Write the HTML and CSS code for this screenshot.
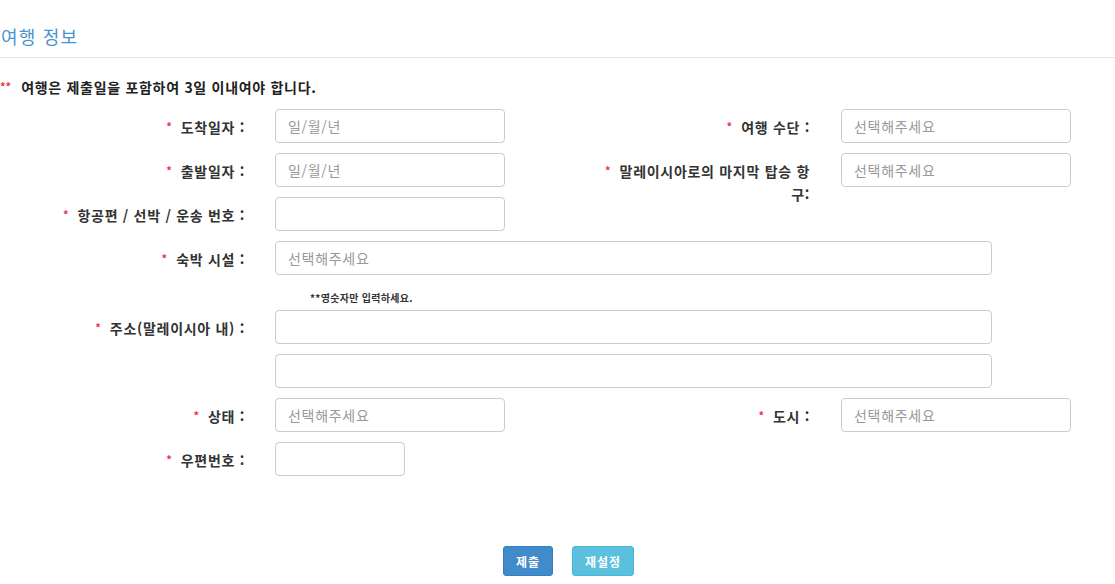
FILE: index.html
```html
<!DOCTYPE html>
<html lang="ko">
<head>
<meta charset="utf-8">
<title>여행 정보</title>
<link rel="stylesheet" href="styles.css">
</head>
<body>
<div class="page">
  <h3 class="section-title">여행 정보</h3>
  <div class="rule"></div>
  <p class="notice"><span class="req notice-star">**</span>여행은 제출일을 포함하여 3일 이내여야 합니다.</p>

  <form class="form">
    <div class="row">
      <div class="group">
        <label class="label"><span class="req">*</span>도착일자 :</label>
        <input class="input" type="text" placeholder="일/월/년">
      </div>
      <div class="group group-right">
        <label class="label label-right"><span class="req">*</span>여행 수단 :</label>
        <input class="input" type="text" placeholder="선택해주세요">
      </div>
    </div>

    <div class="row">
      <div class="group">
        <label class="label"><span class="req">*</span>출발일자 :</label>
        <input class="input" type="text" placeholder="일/월/년">
      </div>
      <div class="group group-right">
        <label class="label label-right"><span class="req">*</span>말레이시아로의 마지막 탑승 항구:</label>
        <input class="input" type="text" placeholder="선택해주세요">
      </div>
    </div>

    <div class="row">
      <div class="group">
        <label class="label"><span class="req">*</span>항공편 / 선박 / 운송 번호 :</label>
        <input class="input" type="text">
      </div>
    </div>

    <div class="row">
      <div class="group">
        <label class="label"><span class="req">*</span>숙박 시설 :</label>
        <input class="input input-wide" type="text" placeholder="선택해주세요">
      </div>
    </div>

    <div class="hint">**영숫자만 입력하세요.</div>

    <div class="row">
      <div class="group">
        <label class="label"><span class="req">*</span>주소(말레이시아 내) :</label>
        <input class="input input-wide" type="text">
      </div>
    </div>

    <div class="row">
      <div class="group">
        <span class="label"></span>
        <input class="input input-wide" type="text">
      </div>
    </div>

    <div class="row">
      <div class="group">
        <label class="label"><span class="req">*</span>상태 :</label>
        <input class="input" type="text" placeholder="선택해주세요">
      </div>
      <div class="group group-right">
        <label class="label label-right"><span class="req">*</span>도시 :</label>
        <input class="input" type="text" placeholder="선택해주세요">
      </div>
    </div>

    <div class="row">
      <div class="group">
        <label class="label"><span class="req">*</span>우편번호 :</label>
        <input class="input input-short" type="text">
      </div>
    </div>

    <div class="actions">
      <button type="button" class="btn btn-primary">제출</button>
      <button type="button" class="btn btn-info">재설정</button>
    </div>
  </form>
</div>
</body>
</html>
```

FILE: styles.css
```css
* {
  box-sizing: border-box;
}

html, body {
  margin: 0;
  padding: 0;
  background: #ffffff;
}

body {
  font-family: "Noto Sans CJK KR", "Noto Sans", "Liberation Sans", sans-serif;
  color: #333333;
  font-size: 14px;
  letter-spacing: 0.7px;
}

.page {
  width: 1115px;
}

.section-title {
  margin: 0;
  padding: 24px 0 0 1px;
  height: 57px;
  font-size: 18px;
  line-height: 24px;
  font-weight: 400;
  letter-spacing: 1.2px;
  color: #4b93cf;
}

.rule {
  height: 1px;
  background: #e3e3e3;
}

.notice {
  margin: 0;
  padding-top: 19px;
  height: 51px;
  font-size: 14px;
  line-height: 20px;
  font-weight: 700;
  color: #222222;
}

.req {
  color: #e8334a;
  font-weight: 700;
  font-size: 11px;
  margin-right: 9px;
  position: relative;
  top: -2px;
  letter-spacing: 0;
}

.notice-star {
  margin-right: 10px;
}

.form {
  display: flex;
  flex-direction: column;
}

.row {
  display: flex;
  height: 34px;
  margin-bottom: 10px;
}

.group {
  display: flex;
  align-items: flex-start;
}

.group-right {
  margin-left: 90px;
}

.label {
  width: 245px;
  margin-right: 30px;
  padding-top: 7px;
  text-align: right;
  font-weight: 700;
  font-size: 14px;
  line-height: 22px;
  color: #333333;
  flex-shrink: 0;
}

.label-right {
  width: 215px;
  margin-right: 31px;
}

.input {
  width: 230px;
  height: 34px;
  padding: 6px 12px;
  border: 1px solid #cccccc;
  border-radius: 4px;
  font-family: inherit;
  font-size: 14px;
  letter-spacing: 0.7px;
  color: #555555;
  background: #ffffff;
  flex-shrink: 0;
}

.input::placeholder {
  color: #999999;
}

.input-wide {
  width: 717px;
}

.input-short {
  width: 130px;
}

.hint {
  height: 25px;
  margin-top: 0;
  padding-left: 310px;
  font-size: 10px;
  line-height: 25px;
  font-weight: 700;
  letter-spacing: 0.3px;
  color: #333333;
}

.actions {
  display: flex;
  justify-content: center;
  gap: 19px;
  padding-left: 22px;
  margin-top: 60px;
}

.btn {
  height: 30px;
  padding: 0 12px;
  border: 1px solid transparent;
  border-radius: 3px;
  font-family: inherit;
  font-size: 12px;
  font-weight: 700;
  letter-spacing: 1px;
  color: #ffffff;
  cursor: pointer;
}

.btn-primary {
  background: #428bca;
  border-color: #357ebd;
}

.btn-info {
  background: #5bc0de;
  border-color: #46b8da;
}
```
